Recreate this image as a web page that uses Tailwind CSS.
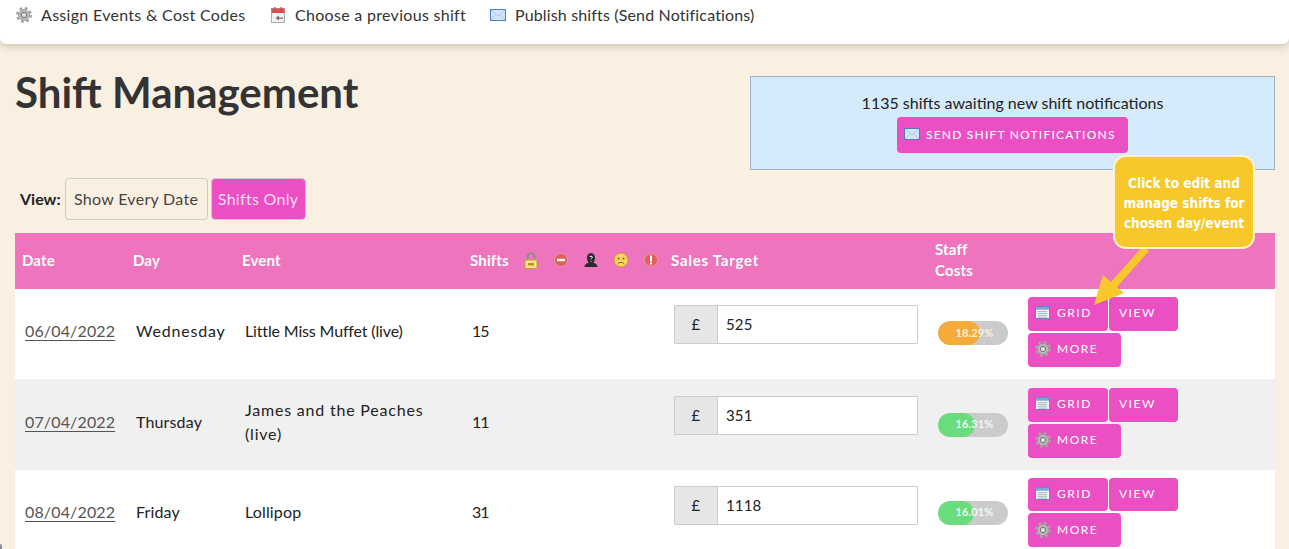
<!DOCTYPE html>
<html lang="en">
<head>
  <meta charset="UTF-8" />
  <title>Shift Management</title>
  <script src="https://cdn.jsdelivr.net/npm/@tailwindcss/browser@4"></script>
</head>
<body class="relative h-[549px] overflow-hidden bg-[#faf0e2] text-[#222] font-['Lato','Noto_Sans',sans-serif]">

  <!-- icons -->
  <svg class="hidden">
    <symbol id="gear" viewBox="0 0 16 16">
      <circle cx="8" cy="8" r="6.500" fill="none" stroke="#a6a6a6" stroke-width="3" stroke-dasharray="2.600 2.500"/>
      <circle cx="8" cy="8" r="5.600" fill="#b9b9b9" stroke="#8e8e8e" stroke-width=".5"/>
      <circle cx="8" cy="8" r="2.600" fill="#e4e4e4" stroke="#6e6e6e"/>
    </symbol>
    <symbol id="calendar" viewBox="0 0 16 16">
      <rect x="1.500" y="1.500" width="13" height="14" fill="#eef1f3" stroke="#8b8b8b" stroke-width=".7"/>
      <rect x="1.500" y="1.500" width="13" height="4.500" fill="#e8484a"/>
      <rect x="4" y="0" width="1.500" height="3.500" fill="#777"/>
      <rect x="10.500" y="0" width="1.500" height="3.500" fill="#777"/>
      <path d="M13 10.500H9V8.500L5.500 11 9 13.500V11.800h4z" fill="#8a6a6a"/>
    </symbol>
    <symbol id="mail" viewBox="0 0 16 12">
      <rect x=".5" y=".5" width="15" height="11" fill="#d5e5f8" stroke="#4f7fc0"/>
      <path d="M1 1l7 6 7-6M1 11l5-5.500M15 11l-5-5.500" fill="none" stroke="#9dbde6" stroke-width=".8"/>
    </symbol>
    <symbol id="window" viewBox="0 0 16 14">
      <rect x=".5" y=".5" width="15" height="13" fill="#f2f6fb" stroke="#5c87b8"/>
      <rect x="1" y="1" width="14" height="3" fill="#7ba6d8"/>
      <path d="M3 6h10M3 8h10M3 10h10M3 12h10" stroke="#9aa9ba" stroke-width=".9"/>
    </symbol>
  </svg>

  <!-- Top Nav -->
  <nav class="h-11 bg-white rounded-b-md shadow-[0_2px_8px_rgba(90,70,40,0.3)] pl-4 flex items-start pt-[7px] text-[16px] leading-4 tracking-[0.3px] text-[#333]">
    <a class="flex items-center w-[254px]"><svg class="w-4 h-4 mr-[9px]"><use href="#gear"/></svg>Assign Events &amp; Cost Codes</a>
    <a class="flex items-center w-[220px]"><svg class="w-4 h-4 mr-[9px]"><use href="#calendar"/></svg>Choose a previous shift</a>
    <a class="flex items-center tracking-[0.15px]"><svg class="w-4 h-3 mr-[9px]"><use href="#mail"/></svg>Publish shifts (Send Notifications)</a>
  </nav>

  <main class="px-[15px] relative">
    <!-- Title and notification box -->
    <div class="flex justify-between h-[134px] pt-8">
      <h1 class="text-[42px] leading-[34px] mt-[-1px] font-bold text-[#333]">Shift Management</h1>
      <div class="w-[525px] h-[94px] -mr-px bg-[#d5eafa] border border-[#9db2c2] flex flex-col items-center pt-[17px]">
        <p class="text-[16px] leading-[18px]">1135 shifts awaiting new shift notifications</p>
        <button class="mt-[5px] w-[231px] h-9 bg-[#eb4fc3] rounded-sm text-white text-xs tracking-[1.2px] font-medium flex items-center pl-[7px]"><svg class="w-4 h-3 mr-[6px] -mt-[2px]"><use href="#mail"/></svg>SEND SHIFT NOTIFICATIONS</button>
      </div>
    </div>

    <!-- View toggle -->
    <div class="flex items-center h-[42px] pl-[5px] text-[16px]">
      <span class="font-bold mr-[4px]">View:</span>
      <button class="h-[42px] w-[143px] border border-[#ccc] rounded-[4px] text-[#444] tracking-[0.3px]">Show Every Date</button>
      <button class="h-[42px] w-[95px] ml-[3px] border border-[#ccc] rounded-[4px] bg-[#eb4fc3] text-[#fbdcf3] tracking-[0.3px]">Shifts Only</button>
    </div>

    <!-- Shift table -->
    <table class="w-[1260px] table-fixed border-collapse mt-[13px] text-[16px] tracking-[0.15px]">
      <colgroup>
        <col class="w-[111px]"/><col class="w-[109px]"/><col class="w-[228px]"/><col class="w-[201px]"/><col class="w-[264px]"/><col class="w-[90px]"/><col class="w-[257px]"/>
      </colgroup>
      <thead>
        <tr class="h-14 bg-[#ed74bd] text-white text-[15px] font-black text-left">
          <th class="pl-[7px] pb-[2px]">Date</th>
          <th class="pl-[7px] pb-[2px]">Day</th>
          <th class="pl-[7px] pb-[2px]">Event</th>
          <th class="pl-[7px] pb-[2px]">
            <div class="flex items-center">
              <span class="w-[53px]">Shifts</span>
              <svg class="w-4 h-[17px] mr-[14px]" viewBox="0 0 16 17"><path d="M4.500 9V5a3.500 3.500 0 017 0v4" fill="none" stroke="#8f8f8f" stroke-width="2.200"/><rect x="2" y="8" width="12" height="8.500" fill="#f9e38c" stroke="#cc9a30"/><rect x="5" y="11" width="6" height="2.500" fill="#b88f2e"/></svg>
              <svg class="w-4 h-4 mr-[14px]" viewBox="0 0 16 16"><circle cx="8" cy="8" r="6.500" fill="#e0605a" stroke="#d9a09c"/><rect x="4" y="6.800" width="8" height="2.400" fill="#fff"/></svg>
              <svg class="w-4 h-4 mr-[14px]" viewBox="0 0 16 16"><path d="M1.500 15c0-3 3-3.500 4-4.500C4.500 9 4 7.500 4 5.500 4 3 6 1 8 1s4 2 4 4.500c0 2-.5 3.500-1.500 5 1 1 4 1.500 4 4.500z" fill="#2b2b2b"/><path d="M6.500 5c0-1 3-1 3 0 0 1.200-1.500 1-1.500 2.300M8 9v.8" stroke="#fff" stroke-width="1" fill="none"/></svg>
              <svg class="w-4 h-4 mr-[14px]" viewBox="0 0 16 16"><circle cx="8" cy="8" r="7" fill="#f6d25e" stroke="#cf9c2e"/><circle cx="5.500" cy="6.500" r="1" fill="#7a6a3a"/><circle cx="10.500" cy="6.500" r="1" fill="#7a6a3a"/><path d="M5 11.500c1.500-1.500 4.500-1.500 6 0" fill="none" stroke="#8a6a2a"/></svg>
              <svg class="w-4 h-4" viewBox="0 0 16 16"><circle cx="8" cy="8" r="6.500" fill="#e2605c" stroke="#e29a96"/><rect x="7" y="3.500" width="2" height="6" fill="#fff"/><rect x="7" y="10.500" width="2" height="2" fill="#fff"/></svg>
            </div>
          </th>
          <th class="pl-[7px] pb-[2px] tracking-[0.75px]">Sales Target</th>
          <th class="pl-[7px] pb-[2px] leading-[21px]">Staff<br/>Costs</th>
          <th></th>
        </tr>
      </thead>
      <tbody>
        <tr class="h-[90px] bg-white">
          <td class="pl-[10px] pb-[6px]"><a class="underline underline-offset-[3px] decoration-1 text-[#555]">06/04/2022</a></td>
          <td class="pl-[10px] pb-[6px] tracking-[0.8px]">Wednesday</td>
          <td class="pl-[10px] pb-[6px] tracking-[-0.15px]">Little Miss Muffet (live)</td>
          <td class="pl-[9px] pb-[6px] tracking-[-1px]">15</td>
          <td class="pl-[10px] pb-[19px]">
            <div class="flex h-[39px] w-[244px] border border-[#ccc] rounded-[1px] text-[15px]">
              <span class="w-[43px] bg-[#e6e6e6] border-r border-[#ccc] flex items-center justify-center">£</span>
              <span class="flex items-center pl-2">525</span>
            </div>
          </td>
          <td class="pl-[10px] pb-[2px]">
            <div class="relative w-[70px] h-6 rounded-full bg-[#cbcbcb] overflow-hidden">
              <div class="w-[42px] h-6 rounded-full bg-[#f5ab37]"></div>
              <span class="absolute inset-0 flex items-center justify-center pl-[3px] text-[11px] font-bold text-[#fbf0dc]">18.29%</span>
            </div>
          </td>
          <td class="pl-[10px] pb-[4px]">
            <div class="flex flex-wrap w-[170px] gap-x-px gap-y-[2px] text-white text-xs tracking-[1.5px]">
              <button class="w-[80px] h-[34px] bg-[#eb4fc3] rounded-sm flex items-center pl-[7px] pb-[3px]"><svg class="w-[15px] h-[13px] mr-[7px]"><use href="#window"/></svg>GRID</button>
              <button class="w-[69px] h-[34px] bg-[#eb4fc3] rounded-sm flex items-center pl-[10px] pb-[3px]">VIEW</button>
              <button class="w-[93px] h-[34px] bg-[#eb4fc3] rounded-sm flex items-center pl-[7px] pb-[2px]"><svg class="w-4 h-4 mr-[6px]"><use href="#gear"/></svg>MORE</button>
            </div>
          </td>
        </tr>
        <tr class="h-[91px] bg-[#f0f0f0]">
          <td class="pl-[10px] pb-[5px]"><a class="underline underline-offset-[3px] decoration-1 text-[#555]">07/04/2022</a></td>
          <td class="pl-[10px] pb-[5px]">Thursday</td>
          <td class="pl-[10px] pb-[5px] leading-6 tracking-[0.8px]">James and the Peaches<br/>(live)</td>
          <td class="pl-[9px] pb-[5px] tracking-[-1px]">11</td>
          <td class="pl-[10px] pb-[18px]">
            <div class="flex h-[39px] w-[244px] border border-[#ccc] rounded-[1px] bg-white text-[15px]">
              <span class="w-[43px] bg-[#e6e6e6] border-r border-[#ccc] flex items-center justify-center">£</span>
              <span class="flex items-center pl-2">351</span>
            </div>
          </td>
          <td class="pl-[10px]">
            <div class="relative w-[70px] h-6 rounded-full bg-[#cbcbcb] overflow-hidden">
              <div class="w-[37px] h-6 rounded-full bg-[#69dc7c]"></div>
              <span class="absolute inset-0 flex items-center justify-center pl-[3px] text-[11px] font-bold text-[#eefbee]">16.31%</span>
            </div>
          </td>
          <td class="pl-[10px] pb-[3px]">
            <div class="flex flex-wrap w-[170px] gap-x-px gap-y-[2px] text-white text-xs tracking-[1.5px]">
              <button class="w-[80px] h-[34px] bg-[#eb4fc3] rounded-sm flex items-center pl-[7px] pb-[3px]"><svg class="w-[15px] h-[13px] mr-[7px]"><use href="#window"/></svg>GRID</button>
              <button class="w-[69px] h-[34px] bg-[#eb4fc3] rounded-sm flex items-center pl-[10px] pb-[3px]">VIEW</button>
              <button class="w-[93px] h-[34px] bg-[#eb4fc3] rounded-sm flex items-center pl-[7px] pb-[2px]"><svg class="w-4 h-4 mr-[6px]"><use href="#gear"/></svg>MORE</button>
            </div>
          </td>
        </tr>
        <tr class="h-[85px] bg-white">
          <td class="pl-[10px] pb-[2px]"><a class="underline underline-offset-[3px] decoration-1 text-[#555]">08/04/2022</a></td>
          <td class="pl-[10px] pb-[2px]">Friday</td>
          <td class="pl-[10px] pb-[2px]">Lollipop</td>
          <td class="pl-[9px] pb-[2px] tracking-[-1px]">31</td>
          <td class="pl-[10px] pb-[14px]">
            <div class="flex h-[39px] w-[244px] border border-[#ccc] rounded-[1px] text-[15px]">
              <span class="w-[43px] bg-[#e6e6e6] border-r border-[#ccc] flex items-center justify-center">£</span>
              <span class="flex items-center pl-2">1118</span>
            </div>
          </td>
          <td class="pl-[10px]">
            <div class="relative w-[70px] h-6 rounded-full bg-[#cbcbcb] overflow-hidden">
              <div class="w-[36px] h-6 rounded-full bg-[#69dc7c]"></div>
              <span class="absolute inset-0 flex items-center justify-center pl-[3px] text-[11px] font-bold text-[#eefbee]">16.01%</span>
            </div>
          </td>
          <td class="pl-[10px]">
            <div class="flex flex-wrap w-[170px] gap-x-px gap-y-[2px] text-white text-xs tracking-[1.5px]">
              <button class="w-[80px] h-[33px] bg-[#eb4fc3] rounded-sm flex items-center pl-[7px] pb-[2px]"><svg class="w-[15px] h-[13px] mr-[7px]"><use href="#window"/></svg>GRID</button>
              <button class="w-[69px] h-[33px] bg-[#eb4fc3] rounded-sm flex items-center pl-[10px] pb-[2px]">VIEW</button>
              <button class="w-[93px] h-[34px] bg-[#eb4fc3] rounded-sm flex items-center pl-[7px]"><svg class="w-4 h-4 mr-[6px]"><use href="#gear"/></svg>MORE</button>
            </div>
          </td>
        </tr>
      </tbody>
    </table>
  </main>

  <!-- Callout over the table -->
  <svg class="absolute left-[1085px] top-[240px] w-[70px] h-[70px]" viewBox="0 0 70 70"><path d="M58 6L26 42l-8-7-9 30 30-12-7-6 32-36z" fill="#f8c72a"/></svg>
  <div class="absolute left-[1113px] top-[155px] w-[142px] h-[94px] pt-[2px] rounded-[13px] border-2 border-[#fdf3d4] bg-[#f8c72a] text-white font-['DejaVu_Sans_Condensed','DejaVu_Sans',sans-serif] font-bold text-[13.5px] leading-5 text-center flex items-center justify-center">
    <p>Click to edit and<br/>manage shifts for<br/>chosen day/event</p>
  </div>

  <!-- window corner at bottom left -->
  <div class="absolute left-0 bottom-0 w-[2px] h-[5px] bg-[#8a8f96] rounded-tr-[2px]"></div>

</body>
</html>
